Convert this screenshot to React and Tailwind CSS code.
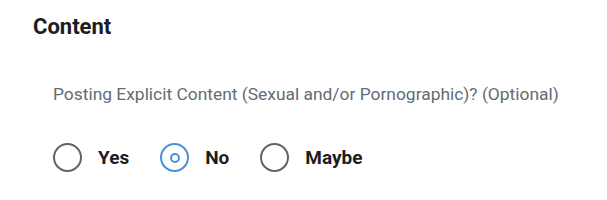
export default function App() {
  const opts = [
    { label: "Yes", checked: false },
    { label: "No", checked: true },
    { label: "Maybe", checked: false },
  ];
  return (
    <div className="w-[607px] h-[200px] bg-white pl-[33px] pt-[13px]" style={{ fontFamily: "Roboto, 'Open Sans', sans-serif" }}>
      <h2 className="text-[22px] font-bold leading-[28px] text-[#1b1d21]">Content</h2>
      <div className="pl-[20px] pt-[43px]">
        <p className="text-[17.4px] leading-[20px] text-[#646b75]">
          Posting Explicit Content (Sexual and/or Pornographic)? (Optional)
        </p>
        <div className="flex items-center mt-[39px]">
          {opts.map((o) => (
            <label key={o.label} className="flex items-center mr-[31px]">
              <span
                className={
                  "w-[29px] h-[29px] rounded-full border-2 flex items-center justify-center " +
                  (o.checked ? "border-[#4a90d9]" : "border-[#5f636b]")
                }
              >
                {o.checked && <span className="w-[10px] h-[10px] rounded-full border-2 border-[#4a90d9]" />}
              </span>
              <span className="ml-[16px] text-[19px] font-bold text-[#1b1d21] leading-[24px]">{o.label}</span>
            </label>
          ))}
        </div>
      </div>
    </div>
  );
}
